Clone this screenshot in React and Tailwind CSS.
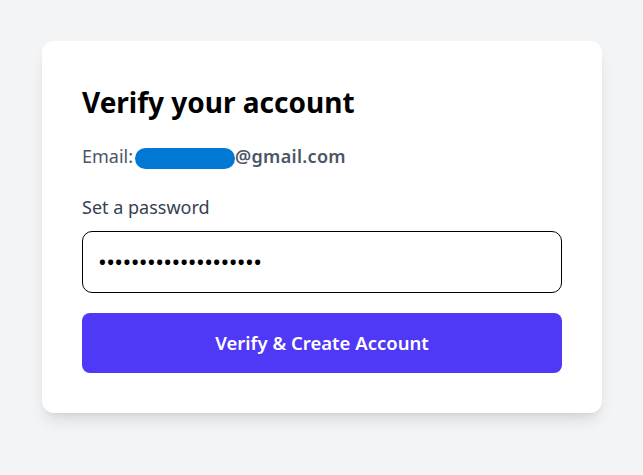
import React from 'react'

const App = () => {
  return (
    <div className="min-h-screen bg-[#f3f4f6] pt-[41px] px-[42px]" style={{ fontFamily: '"Noto Sans", "Open Sans", sans-serif' }}>
      <div className="w-[560px] bg-white rounded-xl shadow-lg p-10">
        <h1 className="text-[28px] leading-[44px] font-bold text-black -mt-[1px]">Verify your account</h1>

        <p className="mt-[18px] text-[18px] leading-[28px] text-gray-600 flex items-center">
          Email:
          <span className="inline-block w-[100px] h-[21px] bg-[#0078d4] rounded-full ml-[2px] translate-y-[2px]" />
          <span className="font-semibold tracking-[0.3px]">@gmail.com</span>
        </p>

        <label className="block mt-[23px] text-[18px] leading-[28px] text-gray-700">Set a password</label>

        <div className="mt-[10px] h-[62px] border border-black rounded-[10px] flex items-center px-4">
          <span className="text-[18px] tracking-[1.4px] text-black font-bold leading-none">••••••••••••••••••••</span>
        </div>

        <button className="mt-5 w-full h-[60px] rounded-lg bg-[#4f39f6] text-white text-[18.5px] font-semibold">
          Verify &amp; Create Account
        </button>
      </div>
    </div>
  )
}

export default App
